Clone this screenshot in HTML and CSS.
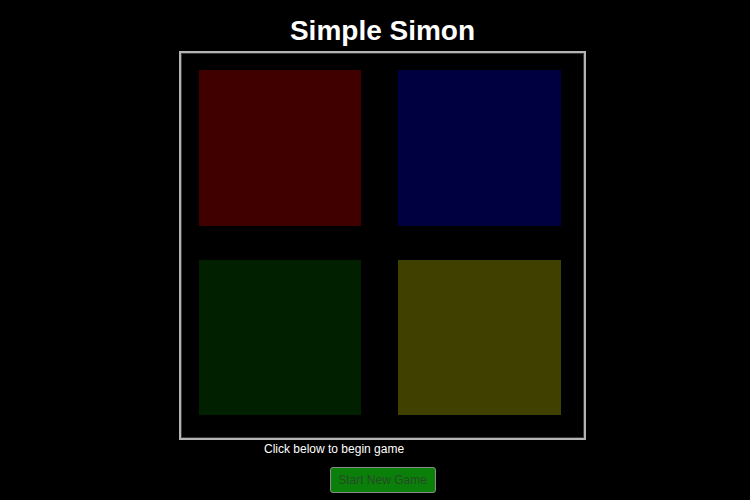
FILE: index.html
```html
<!DOCTYPE html>
<html>
<head>
<meta charset="utf-8">
<link rel="stylesheet" href="styles.css">
</head>
<body>
<div class="page">
  <h1 class="title">Simple Simon</h1>
  <div class="board">
    <div class="pad red"></div>
    <div class="pad blue"></div>
    <div class="pad green"></div>
    <div class="pad yellow"></div>
  </div>
  <p class="hint">Click below to begin game</p>
  <button class="start">Start New Game</button>
</div>
</body>
</html>
```
FILE: styles.css
```css
html, body {
  margin: 0;
  padding: 0;
  background: #000;
}
body {
  width: 750px;
  height: 500px;
  overflow: hidden;
  font-family: "Liberation Sans", Arial, sans-serif;
  color: #fff;
}
.page {
  display: flex;
  flex-direction: column;
  align-items: center;
  padding-left: 15px;
}
.title {
  margin: 15px 0 0;
  font-size: 28px;
  line-height: 32px;
  font-weight: bold;
  color: #fff;
}
.board {
  margin-top: 4px;
  border: 2px solid #b4b4b4;
  box-shadow: inset 0 0 0 1px #3a3a3a;
  padding: 17px 23px 23px 18px;
  display: grid;
  grid-template-columns: 162px 163px;
  grid-template-rows: 156px 155px;
  column-gap: 37px;
  row-gap: 34px;
}
.red { background: #400000; }
.blue { background: #000040; }
.green { background: #002000; }
.yellow { background: #404000; }
.hint {
  align-self: flex-start;
  margin: 2px 0 0 249px;
  font-size: 12px;
  line-height: 14px;
  color: #fff;
}
.start {
  margin-top: 11px;
  width: 106px;
  height: 26px;
  padding: 0;
  background: #0a800a;
  border: 1px solid #8a8a8a;
  border-radius: 3px;
  color: #264a26;
  font-family: "Liberation Sans", Arial, sans-serif;
  font-size: 12px;
}
```
